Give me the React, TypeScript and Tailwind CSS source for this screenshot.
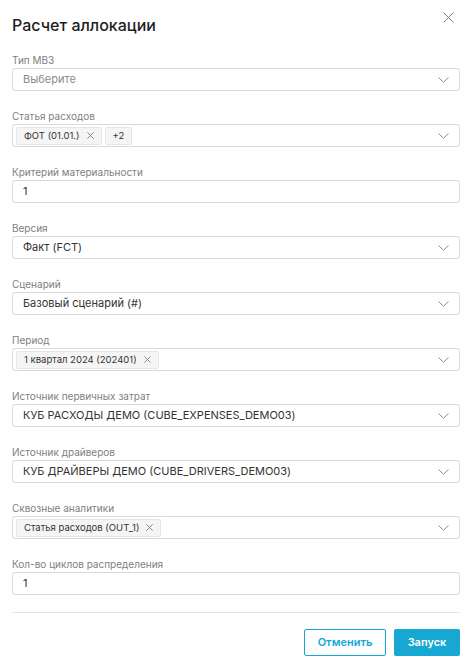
import React from "react";

type Field =
  | { label: string; kind: "select"; value: string; placeholder?: boolean }
  | { label: string; kind: "input"; value: string }
  | { label: string; kind: "tags"; tags: string[]; more?: string };

const fields: Field[] = [
  { label: "Тип МВЗ", kind: "select", value: "Выберите", placeholder: true },
  { label: "Статья расходов", kind: "tags", tags: ["ФОТ (01.01.)"], more: "+2" },
  { label: "Критерий материальности", kind: "input", value: "1" },
  { label: "Версия", kind: "select", value: "Факт (FCT)" },
  { label: "Сценарий", kind: "select", value: "Базовый сценарий (#)" },
  { label: "Период", kind: "tags", tags: ["1 квартал 2024 (202401)"] },
  { label: "Источник первичных затрат", kind: "select", value: "КУБ РАСХОДЫ ДЕМО (CUBE_EXPENSES_DEMO03)" },
  { label: "Источник драйверов", kind: "select", value: "КУБ ДРАЙВЕРЫ ДЕМО (CUBE_DRIVERS_DEMO03)" },
  { label: "Сквозные аналитики", kind: "tags", tags: ["Статья расходов (OUT_1)"] },
  { label: "Кол-во циклов распределения", kind: "input", value: "1" },
];

const Chevron = () => (
  <svg width="11" height="6" viewBox="0 0 11 6" fill="none" className="shrink-0">
    <path d="M0.5 0.5L5.5 5.2L10.5 0.5" stroke="#8c8c8c" strokeWidth="1" />
  </svg>
);

const Cross = ({ size = 7, color = "#8c8c8c" }: { size?: number; color?: string }) => (
  <svg width={size} height={size} viewBox="0 0 10 10" fill="none" className="shrink-0">
    <path d="M0.5 0.5L9.5 9.5M9.5 0.5L0.5 9.5" stroke={color} strokeWidth={10 / size} />
  </svg>
);

const Tag: React.FC<{ text: string; closable?: boolean }> = ({ text, closable = true }) => (
  <div className="flex h-[18px] items-center gap-[7px] rounded-[2px] border border-[#e6e6e6] bg-[#f5f5f5] px-[7px] text-[9.5px] leading-none text-[#333]">
    <span>{text}</span>
    {closable && <Cross />}
  </div>
);

const App: React.FC = () => {
  return (
    <div
      className="flex h-[667px] w-[472px] flex-col bg-white px-3 pt-3"
      style={{ fontFamily: "Inter, 'Noto Sans', sans-serif" }}
    >
      <div className="flex items-start justify-between">
        <h1 className="text-[16px] font-medium leading-[26px] text-[#1f1f1f]">Расчет аллокации</h1>
        <div className="mr-[6px]">
          <Cross size={11} color="#808080" />
        </div>
      </div>

      <div className="mt-[15px] flex flex-col gap-[18px]">
        {fields.map((f) => (
          <div key={f.label} className="flex flex-col">
            <label className="text-[10px] leading-[15px] text-[#808080]">{f.label}</label>
            <div className="flex h-[23px] items-center justify-between rounded-[3px] border border-[#d9d9d9] bg-white pr-[10px]">
              {f.kind === "tags" ? (
                <div className="flex items-center gap-[3px] pl-[3px]">
                  {f.tags.map((t) => (
                    <Tag key={t} text={t} />
                  ))}
                  {f.more && <Tag text={f.more} closable={false} />}
                </div>
              ) : (
                <span
                  className={
                    "pl-[10px] text-[11px] " +
                    (f.kind === "select" && f.placeholder ? "text-[#8c8c8c]" : "text-[#333]")
                  }
                >
                  {f.value}
                </span>
              )}
              {f.kind !== "input" && <Chevron />}
            </div>
          </div>
        ))}
      </div>

      <div className="mt-[17px] h-px bg-[#e5e5e5]" />

      <div className="mt-[16px] flex justify-end gap-2">
        <button className="h-[27px] w-[82px] rounded-[2px] border border-[#16a7d3] bg-white text-[11px] font-semibold text-[#16a7d3]">
          Отменить
        </button>
        <button className="h-[27px] w-[66px] rounded-[2px] bg-[#16a7d3] text-[11px] font-semibold text-white">
          Запуск
        </button>
      </div>
    </div>
  );
};

export default App;
